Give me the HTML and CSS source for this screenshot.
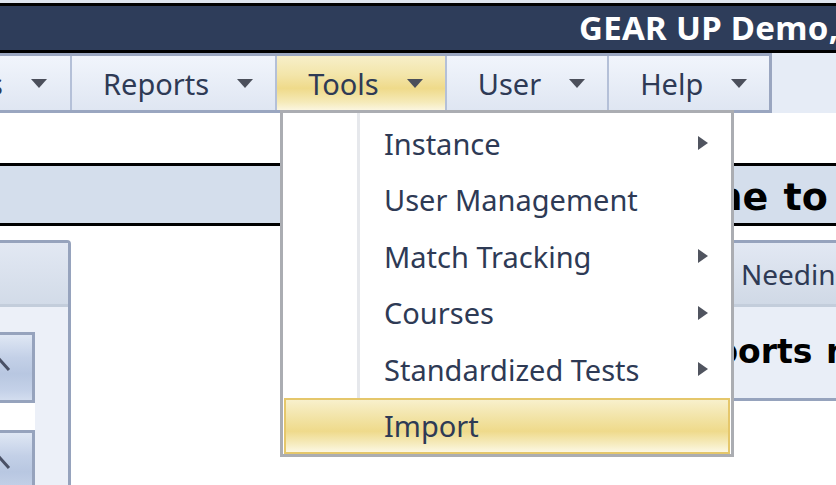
FILE: index.html
```html
<!DOCTYPE html>
<html lang="en">
<head>
<meta charset="utf-8">
<title>GEAR UP Demo</title>
<link rel="stylesheet" href="styles.css">
</head>
<body>
<div class="topstrip"></div>
<header class="titlebar"><span class="title">GEAR UP Demo, State Partnership</span></header>
<nav class="menurow">
  <ul class="menu">
    <li class="menu-item first"><span class="label">Students</span><span class="caret"></span></li>
    <li class="menu-item"><span class="label">Reports</span><span class="caret"></span></li>
    <li class="menu-item active"><span class="label">Tools</span><span class="caret"></span></li>
    <li class="menu-item"><span class="label">User</span><span class="caret"></span></li>
    <li class="menu-item"><span class="label">Help</span><span class="caret"></span></li>
  </ul>
</nav>
<main class="content">
  <div class="welcome"><h1>Welcome to GEAR UP Demo</h1></div>
  <div class="columns">
    <aside class="sidebar">
      <div class="side-head"></div>
      <div class="side-body">
        <div class="btnlist">
          <button class="btn" type="button"><svg width="22" height="16" viewBox="0 0 22 16"><polyline points="2,13 11,3 20,13" fill="none" stroke="#4a5166" stroke-width="3"/></svg></button>
          <button class="btn" type="button"><svg width="22" height="16" viewBox="0 0 22 16"><polyline points="2,13 11,3 20,13" fill="none" stroke="#4a5166" stroke-width="3"/></svg></button>
        </div>
      </div>
    </aside>
    <section class="panel">
      <div class="panel-head"><span class="tab">Students Needing Attention</span></div>
      <div class="panel-body"><p>No reports need attention at this time.</p></div>
    </section>
  </div>
</main>
<div class="dropdown">
  <ul class="dd-list">
    <li class="dd-item"><span>Instance</span><span class="arrow"></span></li>
    <li class="dd-item"><span>User Management</span></li>
    <li class="dd-item"><span>Match Tracking</span><span class="arrow"></span></li>
    <li class="dd-item"><span>Courses</span><span class="arrow"></span></li>
    <li class="dd-item"><span>Standardized Tests</span><span class="arrow"></span></li>
    <li class="dd-item hover"><span>Import</span></li>
  </ul>
</div>
</body>
</html>
```
FILE: styles.css
```css
html, body {
  margin: 0;
  padding: 0;
}

body {
  width: 836px;
  height: 485px;
  overflow: hidden;
  position: relative;
  background: #fff;
  font-family: "Noto Sans", "Open Sans", sans-serif;
}

.topstrip {
  height: 3px;
  background: #dfe5ee;
}

.titlebar {
  height: 44px;
  background: #2e3d5a;
  border-top: 3px solid #000;
  border-bottom: 3px solid #000;
  padding-left: 579px;
  white-space: nowrap;
  overflow: hidden;
  color: #fff;
  font-weight: 700;
  font-size: 33px;
  letter-spacing: 0.3px;
  line-height: 44px;
}

.menurow {
  display: flex;
  background: #e6ecf6;
}

.menu {
  list-style: none;
  margin: 0 0 0 -130px;
  padding: 0;
  display: flex;
  border: 3px solid #9aa6c0;
  border-left: 0;
}

.menu-item {
  display: flex;
  align-items: center;
  height: 54px;
  padding: 0 22px 0 31px;
  background: linear-gradient(#f1f5fc, #dfe6f2);
  color: #2e3a55;
  font-size: 29px;
  border-left: 2px solid #b4c0d8;
  white-space: nowrap;
}

.menu-item.first {
  box-sizing: border-box;
  width: 200px;
  justify-content: flex-end;
  padding-right: 23px;
  border-left: 0;
  overflow: hidden;
}

.menu-item.active {
  background: linear-gradient(#f7efc9 0%, #f3e5aa 35%, #efda8a 60%, #f5eab8 85%, #fbf6df 100%);
}

.caret {
  width: 0;
  height: 0;
  border-left: 8.5px solid transparent;
  border-right: 8.5px solid transparent;
  border-top: 9px solid #4b4f5b;
  margin-left: 28px;
}

/* dropdown */
.dropdown {
  position: absolute;
  left: 280px;
  top: 110px;
  width: 454px;
  box-sizing: border-box;
  border: 3px solid #abadb2;
  background: #fff;
  padding: 2px 1px 0;
  z-index: 10;
}

.dropdown::before {
  content: "";
  position: absolute;
  left: 74px;
  top: 0;
  bottom: 0;
  width: 3px;
  background: #e6e8ec;
}

.dd-list {
  list-style: none;
  margin: 0;
  padding: 0;
}

.dd-item {
  position: relative;
  display: flex;
  align-items: center;
  height: 56.5px;
  box-sizing: border-box;
  border: 2px solid transparent;
  padding: 0 20px 0 98px;
  font-size: 29px;
  color: #2e3a55;
  white-space: nowrap;
}

.dd-item.hover {
  z-index: 1;
  border-color: #e5c76b;
  background: linear-gradient(#f8f0cc 0%, #f2e3a5 35%, #efda8b 60%, #f6ecc0 85%, #fcf8e3 100%);
}

.arrow {
  margin-left: auto;
  width: 0;
  height: 0;
  border-top: 7.5px solid transparent;
  border-bottom: 7.5px solid transparent;
  border-left: 10px solid #50545f;
}

/* content */
.content {
  padding-top: 50px;
}

.welcome {
  height: 51px;
  padding: 6px 0 0 575px;
  border-top: 3px solid #000;
  border-bottom: 3px solid #000;
  background: #d4deec;
  white-space: nowrap;
}

.welcome h1 {
  margin: 0;
  font-family: "DejaVu Sans", Verdana, sans-serif;
  font-weight: 700;
  font-size: 38px;
  line-height: 51px;
  word-spacing: 2px;
  color: #000;
}

.columns {
  display: flex;
  align-items: flex-start;
  margin-top: 14px;
}

.sidebar {
  flex: none;
  width: 106px;
  margin-left: -35px;
  box-sizing: border-box;
  border-top: 3px solid #96a3bd;
  border-right: 3px solid #96a3bd;
  border-top-right-radius: 4px;
  overflow: hidden;
}

.side-head {
  height: 61px;
  background: linear-gradient(#e2e8f3, #d2dbe8);
  border-bottom: 3px solid #c3cddb;
}

.side-body {
  height: 300px;
  padding-top: 25px;
  background: #ecf0f8;
}

.btnlist {
  width: 70px;
  background: #fff;
  display: flex;
  flex-direction: column;
  gap: 27px;
}

.btn {
  display: flex;
  align-items: center;
  justify-content: center;
  width: 70px;
  height: 71px;
  box-sizing: border-box;
  padding: 0 0 6px 0;
  border: 3px solid #96a3bd;
  background: linear-gradient(#dfe7f4 0%, #c3d0e7 35%, #b8c7e1 60%, #c4d1e8 85%, #d3ddef 100%);
}

.panel {
  flex: none;
  width: 700px;
  margin-left: 229px;
  border-top: 3px solid #96a3bd;
  border-bottom: 3px solid #96a3bd;
  border-left: 3px solid #96a3bd;
}

.panel-head {
  height: 61px;
  display: flex;
  align-items: center;
  padding-left: 314px;
  background: linear-gradient(#e2e8f3, #d0d9e6);
  border-bottom: 3px solid #c3cddb;
  font-size: 28px;
  color: #2e3a55;
  white-space: nowrap;
}

.panel-body {
  height: 89px;
  display: flex;
  align-items: center;
  padding: 0 0 2px 309px;
  background: #e9eef7;
  white-space: nowrap;
}

.panel-body p {
  margin: 0;
  font-family: "DejaVu Sans", Verdana, sans-serif;
  font-weight: 700;
  font-size: 33px;
  word-spacing: 2px;
  color: #000;
}
```
